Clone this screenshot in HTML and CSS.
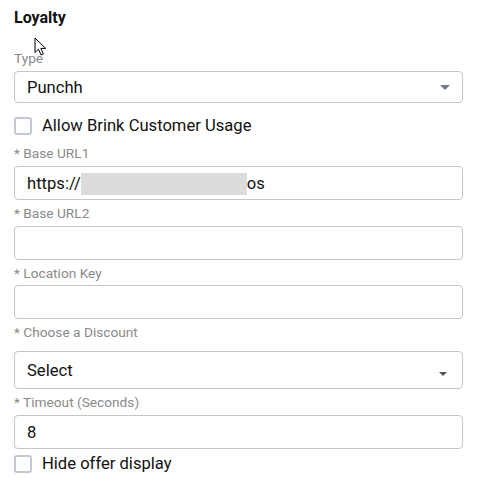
FILE: index.html
```html
<!DOCTYPE html>
<html>
<head>
<meta charset="utf-8">
<link rel="stylesheet" href="styles.css">
</head>
<body>
<div class="form">
  <h2 class="title">Loyalty</h2>

  <label class="label l-type">Type</label>
  <div class="box select s-type"><span>Punchh</span><span class="caret blue"></span></div>

  <div class="check c1"><span class="cb"></span><span>Allow Brink Customer Usage</span></div>

  <label class="label">* Base URL1</label>
  <div class="box input"><span>https://</span><span class="redact"></span><span>os</span></div>

  <label class="label">* Base URL2</label>
  <div class="box input"></div>

  <label class="label">* Location Key</label>
  <div class="box input i-loc"></div>

  <label class="label l-disc">* Choose a Discount</label>
  <div class="box select s-disc"><span>Select</span><span class="caret dark"></span></div>

  <label class="label">* Timeout (Seconds)</label>
  <div class="box input"><span>8</span></div>

  <div class="check c2"><span class="cb"></span><span>Hide offer display</span></div>
</div>
<svg class="cursor" width="14" height="20" viewBox="0 0 14 20">
  <path d="M1 1 L1 15.5 L4.5 12.2 L7 18 L9.3 17 L6.9 11.4 L11.7 11.4 Z" fill="#fff" stroke="#000" stroke-width="1" stroke-linejoin="round"/>
</svg>
</body>
</html>
```
FILE: styles.css
```css
html, body {
  margin: 0;
  padding: 0;
  background: #fff;
}
body {
  font-family: Roboto, "Liberation Sans", sans-serif;
  color: #111;
  position: relative;
  width: 478px;
  height: 488px;
  overflow: hidden;
}
.form {
  padding: 8px 15px 0 14px;
  display: flex;
  flex-direction: column;
}
.title {
  margin: 0;
  font-size: 16px;
  font-weight: 700;
  line-height: 20px;
  color: #111;
}
.label {
  display: block;
  font-size: 13.7px;
  line-height: 16px;
  color: #8a8a8a;
  margin-top: 5px;
  margin-bottom: 5px;
}
.l-type {
  margin-top: 22px;
  margin-bottom: 5px;
}
.box {
  box-sizing: border-box;
  border: 1px solid #c3c7cc;
  border-radius: 4px;
  display: flex;
  align-items: center;
  padding: 0 12px;
  font-size: 16.6px;
  color: #111;
  background: #fff;
}
.select {
  justify-content: space-between;
}
.s-type {
  height: 32px;
}
.s-disc {
  height: 38px;
  margin-top: 6px;
}
.input {
  height: 34px;
}
.i-loc {
  margin-top: -1px;
}
.caret {
  width: 0;
  height: 0;
  border-left: 5px solid transparent;
  border-right: 5px solid transparent;
}
.caret.blue {
  border-top: 5px solid #6a7d8e;
  margin-right: 0;
}
.caret.dark {
  border-left-width: 4px;
  border-right-width: 4px;
  border-top: 4px solid #555;
  margin-top: 8px;
  margin-right: 3px;
}
.redact {
  display: inline-block;
  width: 166px;
  height: 22px;
  background: #dcdcdc;
  margin-top: 2px;
}
.check {
  display: flex;
  align-items: center;
  gap: 10px;
  font-size: 16.6px;
  line-height: 20px;
  color: #111;
}
.c1 {
  margin-top: 13px;
  margin-bottom: 4px;
}
.c2 {
  margin-top: 5px;
}
.cb {
  box-sizing: border-box;
  width: 18px;
  height: 18px;
  border: 2px solid #c2c8d0;
  border-radius: 3px;
  background: #fff;
}
.cursor {
  position: absolute;
  left: 34px;
  top: 37px;
}
```
